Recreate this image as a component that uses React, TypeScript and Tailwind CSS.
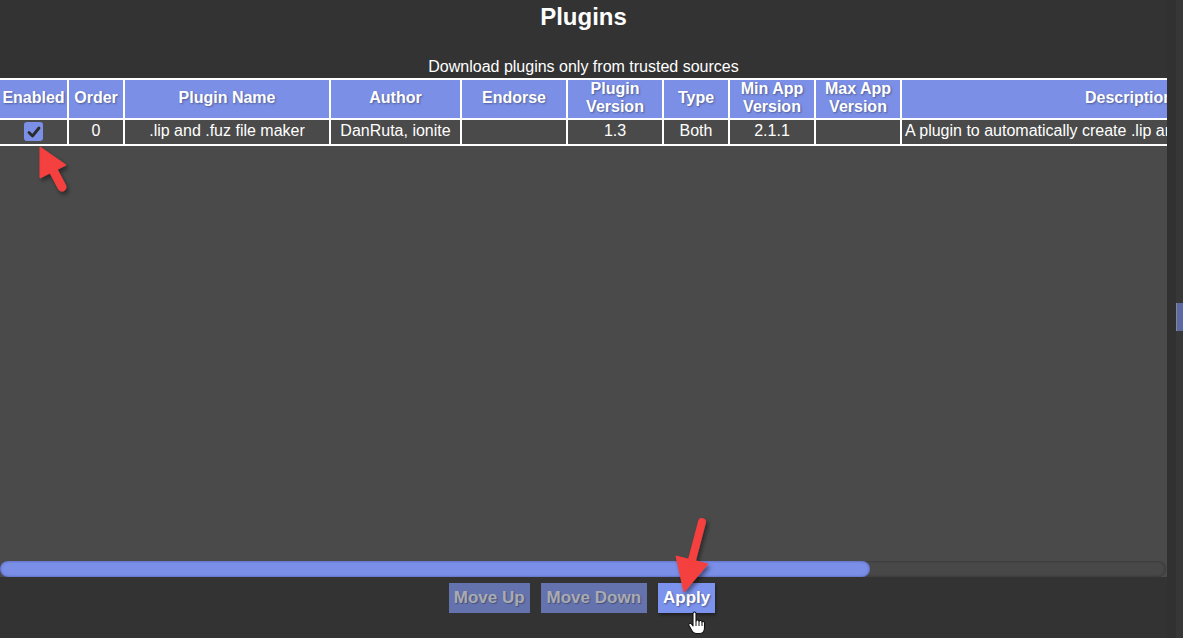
import React from "react";

const cols = [
  { key: "enabled", label: ["Enabled"], w: "w-[69px]" },
  { key: "order", label: ["Order"], w: "w-[56px]" },
  { key: "name", label: ["Plugin Name"], w: "w-[206px]" },
  { key: "author", label: ["Author"], w: "w-[131px]" },
  { key: "endorse", label: ["Endorse"], w: "w-[106px]" },
  { key: "version", label: ["Plugin", "Version"], w: "w-[96px]" },
  { key: "type", label: ["Type"], w: "w-[66px]" },
  { key: "min", label: ["Min App", "Version"], w: "w-[86px]" },
  { key: "max", label: ["Max App", "Version"], w: "w-[86px]" },
  { key: "desc", label: ["Description"], w: "w-[456px]" },
];

const row: Record<string, string> = {
  order: "0",
  name: ".lip and .fuz file maker",
  author: "DanRuta, ionite",
  endorse: "",
  version: "1.3",
  type: "Both",
  min: "2.1.1",
  max: "",
  desc: "A plugin to automatically create .lip and .fuz files for generated audio",
};

function Checkbox() {
  return (
    <div className="w-[19px] h-[19px] rounded-[3px] bg-[#7b8fe6] flex items-center justify-center mt-[2px]">
      <svg width="14" height="12" viewBox="0 0 14 12">
        <path d="M2 6.5 L5.5 10 L12 2" fill="none" stroke="#2b2b2b" strokeWidth="2.8" strokeLinecap="round" strokeLinejoin="round" />
      </svg>
    </div>
  );
}

function Arrows() {
  return (
    <svg className="absolute inset-0 pointer-events-none" width="1183" height="638" viewBox="0 0 1183 638">
      <defs>
        <filter id="sh" x="-50%" y="-50%" width="200%" height="200%">
          <feDropShadow dx="2" dy="3" stdDeviation="2" floodColor="#000" floodOpacity="0.45" />
        </filter>
      </defs>
      <g filter="url(#sh)" fill="#f53f3f" stroke="#f53f3f">
        <path d="M40 147 L40 178 L66 165 Z" strokeWidth="1" strokeLinejoin="round" />
        <line x1="53" y1="170" x2="62" y2="187" strokeWidth="9" strokeLinecap="round" />
        <path d="M684 592 L676 556 L708 564 Z" strokeWidth="1" strokeLinejoin="round" />
        <line x1="702" y1="522" x2="692" y2="560" strokeWidth="8" strokeLinecap="round" />
      </g>
      <g transform="translate(688 611)">
        <path
          d="M5 2.5 C5 0.5 8 0.5 8 2.5 L8 10 C8.5 8.5 11 8.5 11 10.5 C11.5 9 14 9 14 11 C14.5 10 16.5 10.5 16.5 12 L16.5 17 C16.5 20 14.5 22.5 11.5 22.5 L8.5 22.5 C6 22.5 4.5 21 3.5 19 L1 14.5 C0 12.5 2.5 11.5 3.5 13 L5 15 Z"
          fill="#fff"
          stroke="#111"
          strokeWidth="1.1"
          strokeLinejoin="round"
        />
        <path d="M8 10 L8 15 M11 10.5 L11 15 M14 11 L14 15" stroke="#111" strokeWidth="1" fill="none" />
      </g>
    </svg>
  );
}

export default function App() {
  return (
    <div className="relative w-[1183px] h-[638px] bg-[#333333] flex overflow-hidden font-['Liberation_Sans',Arial,sans-serif] text-white select-none">
      <div className="w-[1167px] flex flex-col">
        {/* Title */}
        <div className="h-[78px] flex flex-col items-center">
          <h1 className="pt-[3px] text-[24px] leading-[28px] font-bold">Plugins</h1>
          <p className="mt-[27px] text-[16px] leading-[18px]">Download plugins only from trusted sources</p>
        </div>

        {/* Table panel */}
        <div className="flex-1 bg-[#4a4a4a] flex flex-col overflow-hidden">
          <div className="border-t-2 border-white flex flex-col w-max">
            <div className="flex h-[40px] border-b-2 border-white bg-[#7b8fe6]">
              {cols.map((c) => (
                <div
                  key={c.key}
                  className={`${c.w} shrink-0 border-r-2 border-white flex flex-col items-center justify-center pb-[3px] text-[16px] leading-[18px] font-bold [text-shadow:1px_1px_2px_rgba(0,0,0,0.35)]`}
                >
                  {c.label.map((l) => (
                    <span key={l}>{l}</span>
                  ))}
                </div>
              ))}
            </div>
            <div className="flex h-[26px] border-b-2 border-white">
              {cols.map((c) => (
                <div
                  key={c.key}
                  className={`${c.w} shrink-0 border-r-2 border-white flex items-start text-[16px] leading-[21px] whitespace-nowrap overflow-hidden ${
                    c.key === "desc" ? "justify-start pl-[3px]" : "justify-center"
                  }`}
                >
                  {c.key === "enabled" ? <Checkbox /> : row[c.key]}
                </div>
              ))}
            </div>
          </div>
          <div className="flex-1" />
          {/* horizontal scrollbar */}
          <div className="h-[16px] w-[1166px] rounded-full bg-[#484848] shadow-[inset_0_0_3px_rgba(0,0,0,0.35)]">
            <div className="h-full w-[870px] rounded-full bg-[#7b8fe8] shadow-[inset_0_0_3px_rgba(40,50,120,0.6)]" />
          </div>
        </div>

        {/* Buttons */}
        <div className="h-[61px] flex justify-center items-start pt-[6px] gap-[11px] pr-[3px]">
          <button className="h-[30px] px-[5px] bg-[#6472ae] text-[#a9abb2] text-[17px] font-bold leading-[30px] [text-shadow:1px_1px_1px_rgba(0,0,0,0.3)]">
            Move Up
          </button>
          <button className="h-[30px] px-[6px] bg-[#6472ae] text-[#a9abb2] text-[17px] font-bold leading-[30px] [text-shadow:1px_1px_1px_rgba(0,0,0,0.3)]">
            Move Down
          </button>
          <button className="h-[30px] px-[5px] bg-[#7c93ee] text-white text-[17px] font-bold leading-[30px] shadow-[1px_2px_3px_rgba(0,0,0,0.4)] [text-shadow:1px_1px_2px_rgba(0,0,0,0.4)]">
            Apply
          </button>
        </div>
      </div>

      {/* Right edge strip */}
      <div className="flex-1 flex">
        <div className="w-[9px] bg-[#313131]" />
        <div className="flex-1 bg-[#373737] flex flex-col">
          <div className="h-[303px]" />
          <div className="h-[28px] bg-[#5b6aa6] border-l border-[#888]" />
        </div>
      </div>

      <Arrows />
    </div>
  );
}
